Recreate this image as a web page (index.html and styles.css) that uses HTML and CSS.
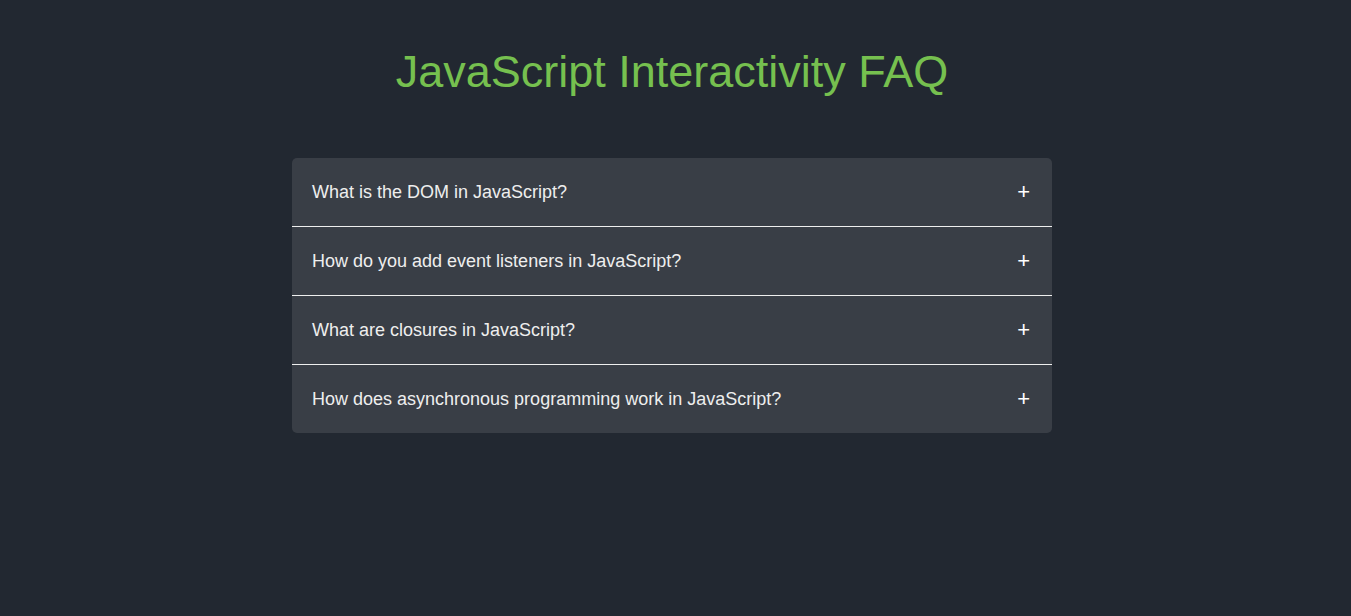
FILE: index.html
```html
<!DOCTYPE html>
<html lang="en">
<head>
<meta charset="utf-8">
<title>JavaScript Interactivity FAQ</title>
<link rel="stylesheet" href="styles.css">
</head>
<body>
<main class="page">
  <h1 class="title">JavaScript Interactivity FAQ</h1>
  <div class="faq">
    <div class="item"><span class="question">What is the DOM in JavaScript?</span><span class="icon">+</span></div>
    <div class="item"><span class="question">How do you add event listeners in JavaScript?</span><span class="icon">+</span></div>
    <div class="item"><span class="question">What are closures in JavaScript?</span><span class="icon">+</span></div>
    <div class="item"><span class="question">How does asynchronous programming work in JavaScript?</span><span class="icon">+</span></div>
  </div>
</main>
</body>
</html>
```
FILE: styles.css
```css
html, body {
  margin: 0;
  padding: 0;
}
body {
  background: #222831;
  font-family: "Liberation Sans", Arial, sans-serif;
  color: #eeeeee;
  min-height: 616px;
}
.page {
  padding-top: 44px;
  padding-right: 7px;
}
.title {
  margin: 0 0 58px;
  text-align: center;
  color: #76c04f;
  font-size: 45px;
  font-weight: normal;
  line-height: 56px;
}
.faq {
  width: 760px;
  margin: 0 auto;
  background: #393e46;
  border-radius: 5px;
  overflow: hidden;
}
.item {
  display: flex;
  justify-content: space-between;
  align-items: center;
  height: 68px;
  padding: 0 20px;
  border-bottom: 1px solid #eeeeee;
}
.item:last-child {
  border-bottom: none;
}
.question {
  font-size: 18px;
}
.icon {
  font-size: 22px;
  line-height: 1;
  color: #ffffff;
  margin-right: 2px;
}
```
